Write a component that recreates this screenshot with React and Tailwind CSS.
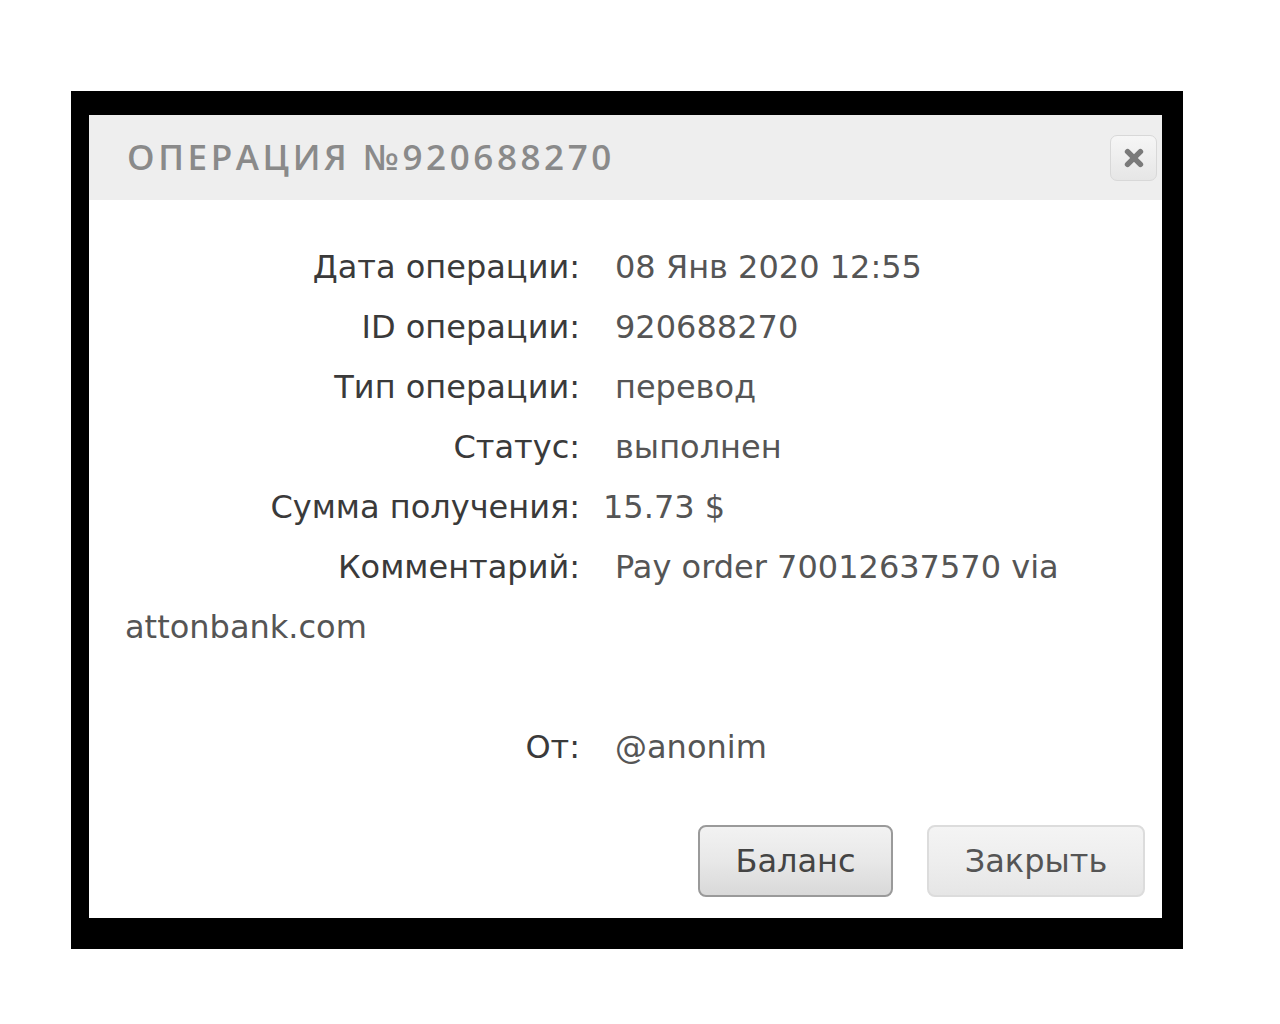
import React from 'react'

const rows = [
  { label: 'Дата операции:', value: '08 Янв 2020 12:55' },
  { label: 'ID операции:', value: '920688270' },
  { label: 'Тип операции:', value: 'перевод' },
  { label: 'Статус:', value: 'выполнен' },
  { label: 'Сумма получения:', value: '15.73 $', tight: true },
]

function Row({ label, value, tight }) {
  return (
    <div className="flex h-[60px] items-center">
      <div className="w-[455px] shrink-0 text-right text-[#3a3a3a]">{label}</div>
      <div className={`${tight ? 'pl-[23px]' : 'pl-[35px]'} text-[#555]`}>{value}</div>
    </div>
  )
}

export default function App() {
  return (
    <div className="min-h-screen bg-white pl-[71px] pt-[91px]">
      <div className="w-[1112px] bg-black pb-[31px] pl-[18px] pr-[21px] pt-[24px]">
        <div className="flex flex-col bg-white">
          {/* header */}
          <div className="flex h-[85px] items-center justify-between bg-[#eeeeee] pl-[38px] pr-[5px]">
            <h1 className="font-['Open_Sans',sans-serif] text-[35px] font-semibold uppercase tracking-[3.6px] text-[#8a8a8a]">
              Операция №920688270
            </h1>
            <button className="flex h-[46px] w-[47px] items-center justify-center rounded-[7px] border border-[#d8d8d8] bg-gradient-to-b from-[#f6f6f6] to-[#e6e6e6]">
              <svg width="22" height="22" viewBox="0 0 24 24">
                <path d="M5 5 L19 19 M19 5 L5 19" stroke="#7a7a7a" strokeWidth="6" strokeLinecap="round" />
              </svg>
            </button>
          </div>

          {/* details */}
          <div className="pl-[36px] pt-[37px] font-['DejaVu_Sans',sans-serif] text-[32px] leading-[60px]">
            {rows.map((r) => (
              <Row key={r.label} {...r} />
            ))}
            <div className="flex h-[60px] items-center">
              <div className="w-[455px] shrink-0 text-right text-[#3a3a3a]">Комментарий:</div>
              <div className="pl-[35px] text-[#555]">Pay order 70012637570 via</div>
            </div>
            <div className="h-[60px] text-[#555]">attonbank.com</div>
            <div className="h-[60px]" />
            <Row label="От:" value="@anonim" />
          </div>

          {/* buttons */}
          <div className="flex justify-end gap-[34px] pb-[21px] pr-[17px] pt-[48px] font-['DejaVu_Sans',sans-serif] text-[32px]">
            <button className="h-[72px] w-[195px] rounded-[8px] border-2 border-[#9a9a9a] bg-gradient-to-b from-[#f2f2f2] via-[#e8e8e8] to-[#d9d9d9] text-[#444]">
              Баланс
            </button>
            <button className="h-[72px] w-[218px] rounded-[8px] border-2 border-[#dcdcdc] bg-gradient-to-b from-[#f4f4f4] via-[#eeeeee] to-[#e6e6e6] text-[#555]">
              Закрыть
            </button>
          </div>
        </div>
      </div>
    </div>
  )
}
